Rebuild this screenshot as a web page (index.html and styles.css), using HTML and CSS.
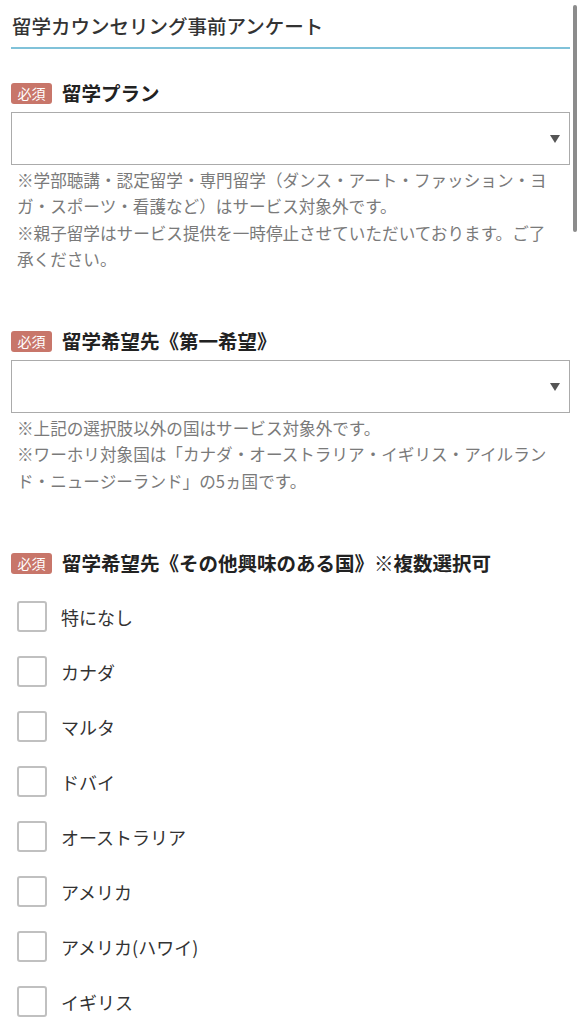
FILE: index.html
```html
<!DOCTYPE html>
<html lang="ja">
<head>
<meta charset="utf-8">
<title>留学カウンセリング事前アンケート</title>
<link rel="stylesheet" href="styles.css">
</head>
<body>
<div class="page">
  <h1 class="title">留学カウンセリング事前アンケート</h1>

  <section class="field first">
    <div class="label-row"><span class="badge">必須</span><span class="label">留学プラン</span></div>
    <div class="select-wrap">
      <select class="select"><option></option></select>
      <svg class="arrow" width="10" height="8" viewBox="0 0 10 8"><path d="M0 0 H10 L5 8 Z" fill="#555"/></svg>
    </div>
    <p class="note">※学部聴講・認定留学・専門留学（ダンス・アート・ファッション・ヨ<br>ガ・スポーツ・看護など）はサービス対象外です。<br>※親子留学はサービス提供を一時停止させていただいております。ご了<br>承ください。</p>
  </section>

  <section class="field">
    <div class="label-row"><span class="badge">必須</span><span class="label">留学希望先《第一希望》</span></div>
    <div class="select-wrap">
      <select class="select"><option></option></select>
      <svg class="arrow" width="10" height="8" viewBox="0 0 10 8"><path d="M0 0 H10 L5 8 Z" fill="#555"/></svg>
    </div>
    <p class="note">※上記の選択肢以外の国はサービス対象外です。<br>※ワーホリ対象国は「カナダ・オーストラリア・イギリス・アイルラン<br>ド・ニュージーランド」の5ヵ国です。</p>
  </section>

  <section class="field">
    <div class="label-row"><span class="badge">必須</span><span class="label">留学希望先《その他興味のある国》※複数選択可</span></div>
    <ul class="checks">
      <li><label class="check"><input type="checkbox" class="box"><span>特になし</span></label></li>
      <li><label class="check"><input type="checkbox" class="box"><span>カナダ</span></label></li>
      <li><label class="check"><input type="checkbox" class="box"><span>マルタ</span></label></li>
      <li><label class="check"><input type="checkbox" class="box"><span>ドバイ</span></label></li>
      <li><label class="check"><input type="checkbox" class="box"><span>オーストラリア</span></label></li>
      <li><label class="check"><input type="checkbox" class="box"><span>アメリカ</span></label></li>
      <li><label class="check"><input type="checkbox" class="box"><span>アメリカ(ハワイ)</span></label></li>
      <li><label class="check"><input type="checkbox" class="box"><span>イギリス</span></label></li>
    </ul>
  </section>
</div>
<div class="scrollbar"></div>
</body>
</html>
```

FILE: styles.css
```css
html, body {
  margin: 0;
  padding: 0;
  background: #fff;
}
body {
  font-family: "Noto Sans CJK JP", "Noto Sans", sans-serif;
  color: #333;
  overflow: hidden;
}
.page {
  padding: 0 12px 0 11px;
}
.title {
  margin: 0;
  padding: 13px 0 8px 1px;
  font-size: 19.5px;
  line-height: 26px;
  font-weight: 500;
  color: #333;
  border-bottom: 2.5px solid #80c2d9;
}
.field {
  padding-top: 57px;
}
.field.first {
  padding-top: 32px;
}
.label-row {
  display: flex;
  align-items: center;
  height: 24px;
}
.badge {
  display: inline-flex;
  align-items: center;
  justify-content: center;
  width: 41px;
  height: 21px;
  border-radius: 3px;
  background: #c8766a;
  color: #fff;
  font-size: 14px;
  line-height: 21px;
  margin-right: 10px;
  flex: none;
}
.label {
  font-size: 19.5px;
  font-weight: 700;
  color: #222;
  line-height: 24px;
}
.select-wrap {
  position: relative;
  margin-top: 7px;
}
.select {
  display: block;
  width: 100%;
  height: 53px;
  box-sizing: border-box;
  margin: 0;
  border: 1px solid #ababab;
  border-radius: 0;
  background: #fff;
  -webkit-appearance: none;
  appearance: none;
  font: inherit;
}
.arrow {
  position: absolute;
  right: 10px;
  top: 23px;
}
.note {
  margin: 2px 0 0;
  padding-left: 6px;
  font-size: 16.6px;
  line-height: 26.3px;
  color: #7a7a7a;
  white-space: nowrap;
}
.checks {
  list-style: none;
  margin: 26px 0 0;
  padding: 0 0 0 6px;
  display: flex;
  flex-direction: column;
  gap: 24px;
}
.check {
  display: flex;
  align-items: center;
  gap: 14px;
  font-size: 18px;
  color: #333;
  height: 31px;
}
.box {
  -webkit-appearance: none;
  appearance: none;
  margin: 0;
  width: 30px;
  height: 31px;
  box-sizing: border-box;
  border: 2px solid #c0c0c0;
  border-radius: 3px;
  background: #fff;
  flex: none;
}
.scrollbar {
  position: absolute;
  left: 573px;
  top: 5px;
  width: 4px;
  height: 227px;
  border-radius: 2px;
  background: #8c8c8c;
}
```
